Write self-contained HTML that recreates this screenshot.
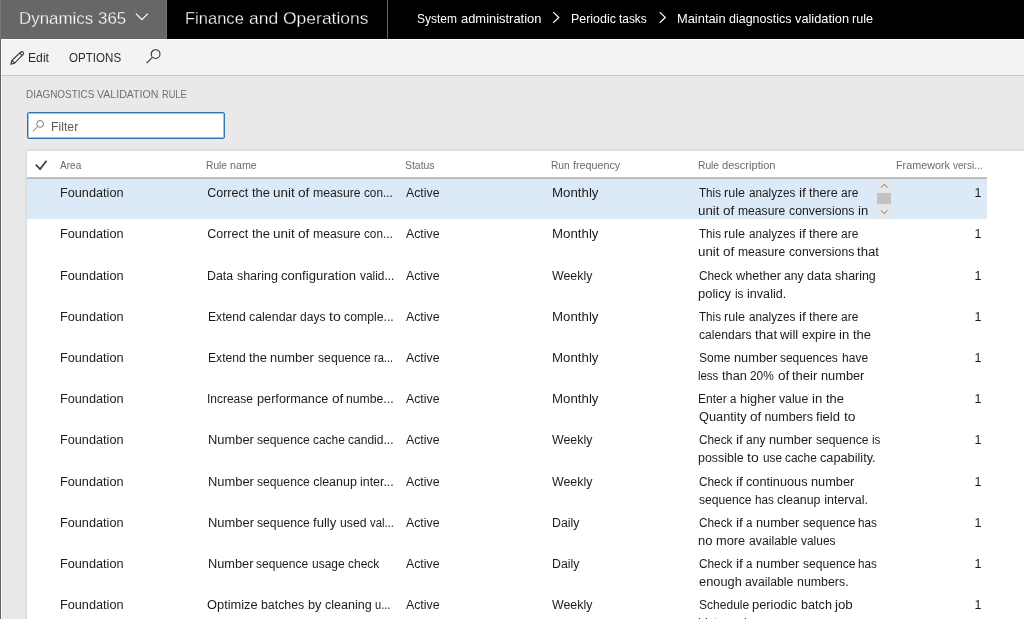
<!DOCTYPE html>
<html><head><meta charset="utf-8">
<title>Maintain diagnostics validation rule</title>
<style>
*{box-sizing:border-box;margin:0;padding:0}
html,body{width:1024px;height:619px;overflow:hidden;background:#e9e9e9;font-family:"Liberation Sans",sans-serif}
.a{position:absolute}
.x{position:absolute;white-space:nowrap;line-height:20px;height:20px}
.x span{position:absolute;top:0;transform-origin:0 0}
svg{position:absolute;overflow:visible}
</style></head><body>
<!-- top bar -->
<div class="a" style="left:0;top:0;width:1024px;height:39px;background:#000"></div>
<div class="a" style="left:0;top:0;width:167px;height:39px;background:#676767;border-right:1px solid #787878"></div>
<div class="a" style="left:387px;top:0;width:1px;height:39px;background:#666"></div>
<svg style="left:0;top:0" width="1024" height="38">
<path d="M135.9 13.7 L141.9 19.7 L147.9 13.7" fill="none" stroke="#fff" stroke-width="1.2"/>
<path d="M553.2 12.1 L558.8 17.45 L553.2 22.8" fill="none" stroke="#fff" stroke-width="1.2"/>
<path d="M659.7 12.1 L665.3 17.45 L659.7 22.8" fill="none" stroke="#fff" stroke-width="1.2"/>
</svg>
<!-- toolbar -->
<div class="a" style="left:0;top:39px;width:1024px;height:37px;background:#f3f3f3;border-bottom:1px solid #c8c8c8;border-top:1px solid #fff"></div>
<svg style="left:10px;top:50px" width="15" height="15" viewBox="0 0 15 15">
<path d="M0.8 14.2 L1.9 10.5 L10.3 2.3 Q12 1.0 13.1 2.2 Q14.2 3.4 13.0 4.7 L4.6 13.2 Z M9.6 3.0 L12.3 5.5 M1.9 10.5 L4.6 13.2" fill="none" stroke="#333" stroke-width="1.05" stroke-linejoin="round"/>
</svg>
<svg style="left:140px;top:45px" width="24" height="22" viewBox="0 0 24 22">
<circle cx="15.6" cy="9.1" r="4.4" fill="none" stroke="#333" stroke-width="1.1"/>
<path d="M12.4 12.4 L6.6 18.1" stroke="#333" stroke-width="1.1" fill="none"/>
</svg>
<!-- left edge -->
<div class="a" style="left:0;top:0;width:1px;height:39px;background:#767676"></div>
<div class="a" style="left:0;top:39px;width:1px;height:580px;background:#666"></div>
<div class="a" style="left:1px;top:39px;width:1px;height:580px;background:rgba(255,255,255,.55)"></div>
<!-- filter -->
<div class="a" style="left:27px;top:112px;width:198px;height:27px;border:1px solid #2e75b6;border-radius:2px;background:#fff;box-shadow:inset 0 0 0 1px rgba(46,117,182,.45)"></div>
<svg style="left:30px;top:118px" width="16" height="16" viewBox="0 0 16 16">
<circle cx="10.1" cy="5.9" r="3.4" fill="none" stroke="#777" stroke-width="1"/>
<path d="M7.6 8.4 L2.9 13.4" stroke="#777" stroke-width="1" fill="none"/>
</svg>
<!-- grid -->
<div class="a" style="left:27px;top:151px;width:1000px;height:480px;background:#fff;box-shadow:0 0 3px rgba(0,0,0,.16)"></div>
<div class="a" style="left:27px;top:177px;width:960px;height:1px;background:#c6c6c6"></div>
<div class="a" style="left:27px;top:178px;width:960px;height:1px;background:#b3b6b9"></div>
<div class="a" style="left:27px;top:179px;width:960px;height:40px;background:#dceaf7"></div>
<svg style="left:33px;top:158px" width="16" height="14" viewBox="0 0 16 14">
<path d="M2.8 6.6 L7.1 11.1 L13.5 2.7" fill="none" stroke="#444" stroke-width="1.8"/>
</svg>
<!-- scrollbar in selected cell -->
<div class="a" style="left:877px;top:179px;width:14px;height:40px;background:#e6e6e6"></div>
<div class="a" style="left:877px;top:193px;width:14px;height:11px;background:#c1c1c1"></div>
<svg style="left:877px;top:179px" width="14" height="40" viewBox="0 0 14 40">
<path d="M3.9 8.6 L7.2 5.3 L10.5 8.6" fill="none" stroke="#666" stroke-width="0.9"/>
<path d="M3.9 31.3 L7.2 34.6 L10.5 31.3" fill="none" stroke="#666" stroke-width="0.9"/>
</svg>
<div id="txt" style="position:absolute;left:0;top:0;width:1024px;height:619px;will-change:transform">
<div class="x" style="left:19.30px;top:9px;font-size:17px;color:#fff;-webkit-text-stroke:.28px #676767"><span style="left:0.00px;transform:scaleX(0.9934)">Dynamics</span> <span style="left:78.92px;transform:scaleX(0.9958)">365</span></div>
<div class="x" style="left:185.45px;top:9px;font-size:17px;color:#fff;-webkit-text-stroke:.28px #000"><span style="left:0.00px;transform:scaleX(0.9726)">Finance</span> <span style="left:63.63px;transform:scaleX(1.0276)">and</span> <span style="left:97.57px;transform:scaleX(1.0287)">Operations</span></div>
<div class="x" style="left:417.45px;top:9px;font-size:13px;color:#fff;"><span style="left:0.00px;transform:scaleX(0.9214)">System</span> <span style="left:43.40px;transform:scaleX(0.9939)">administration</span></div>
<div class="x" style="left:570.81px;top:9px;font-size:13px;color:#fff;"><span style="left:0.00px;transform:scaleX(0.9564)">Periodic</span> <span style="left:48.38px;transform:scaleX(0.9144)">tasks</span></div>
<div class="x" style="left:677.01px;top:9px;font-size:13px;color:#fff;"><span style="left:0.00px;transform:scaleX(0.9895)">Maintain</span> <span style="left:52.06px;transform:scaleX(0.9601)">diagnostics</span> <span style="left:117.95px;transform:scaleX(0.9839)">validation</span> <span style="left:175.44px;transform:scaleX(0.9731)">rule</span></div>
<div class="x" style="left:28.11px;top:48px;font-size:13px;color:#2b2b2b;"><span style="left:0.00px;transform:scaleX(0.9366)">Edit</span></div>
<div class="x" style="left:68.93px;top:48px;font-size:13px;color:#2b2b2b;"><span style="left:0.00px;transform:scaleX(0.8910)">OPTIONS</span></div>
<div class="x" style="left:25.96px;top:84px;font-size:11px;color:#707070;"><span style="left:0.00px;transform:scaleX(0.9004)">DIAGNOSTICS</span> <span style="left:71.22px;transform:scaleX(0.9625)">VALIDATION</span> <span style="left:135.57px;transform:scaleX(0.8385)">RULE</span></div>
<div class="x" style="left:50.65px;top:117px;font-size:12.5px;color:#5a5a5a;"><span style="left:0.00px;transform:scaleX(0.9809)">Filter</span></div>
<div class="x" style="left:59.98px;top:155px;font-size:11px;color:#6a6a6a;"><span style="left:0.00px;transform:scaleX(0.9133)">Area</span></div>
<div class="x" style="left:206.16px;top:155px;font-size:11px;color:#6a6a6a;"><span style="left:0.00px;transform:scaleX(0.9290)">Rule</span> <span style="left:24.00px;transform:scaleX(0.9736)">name</span></div>
<div class="x" style="left:404.54px;top:155px;font-size:11px;color:#6a6a6a;"><span style="left:0.00px;transform:scaleX(0.9487)">Status</span></div>
<div class="x" style="left:551.16px;top:155px;font-size:11px;color:#6a6a6a;"><span style="left:0.00px;transform:scaleX(0.9262)">Run</span> <span style="left:21.65px;transform:scaleX(0.9772)">frequency</span></div>
<div class="x" style="left:698.16px;top:155px;font-size:11px;color:#6a6a6a;"><span style="left:0.00px;transform:scaleX(0.9293)">Rule</span> <span style="left:24.01px;transform:scaleX(1.0056)">description</span></div>
<div class="x" style="left:896.16px;top:155px;font-size:11px;color:#6a6a6a;"><span style="left:0.00px;transform:scaleX(0.9817)">Framework</span> <span style="left:57.03px;transform:scaleX(0.9106)">versi...</span></div>
<div class="x" style="left:60.25px;top:183px;font-size:12.5px;color:#1c1c1c;"><span style="left:0.00px;transform:scaleX(1.0153)">Foundation</span></div>
<div class="x" style="left:207.21px;top:183px;font-size:12.5px;color:#1c1c1c;"><span style="left:0.00px">Correct</span> <span style="left:44.41px;transform:scaleX(1.0425)">the</span> <span style="left:66.00px;transform:scaleX(1.0781)">unit</span> <span style="left:91.21px;transform:scaleX(1.0945)">of</span> <span style="left:106.10px;transform:scaleX(0.9797)">measure</span> <span style="left:157.22px;transform:scaleX(0.9398)">con...</span></div>
<div class="x" style="left:405.88px;top:183px;font-size:12.5px;color:#1c1c1c;"><span style="left:0.00px;transform:scaleX(0.9853)">Active</span></div>
<div class="x" style="left:552.25px;top:183px;font-size:12.5px;color:#1c1c1c;"><span style="left:0.00px;transform:scaleX(1.0619)">Monthly</span></div>
<div class="x" style="left:698.94px;top:183px;font-size:12.5px;color:#1c1c1c;"><span style="left:0.00px;transform:scaleX(0.9312)">This</span> <span style="left:25.42px;transform:scaleX(1.0086)">rule</span> <span style="left:49.87px;transform:scaleX(0.9404)">analyzes</span> <span style="left:99.70px;transform:scaleX(1.1124)">if</span> <span style="left:110.08px;transform:scaleX(1.0103)">there</span> <span style="left:142.30px;transform:scaleX(0.9565)">are</span></div>
<div class="x" style="left:698.45px;top:201px;font-size:12.5px;color:#1c1c1c;"><span style="left:0.00px;transform:scaleX(1.0674)">unit</span> <span style="left:24.95px;transform:scaleX(1.0836)">of</span> <span style="left:39.69px;transform:scaleX(0.9700)">measure</span> <span style="left:90.31px;transform:scaleX(0.9807)">conversions</span> <span style="left:159.16px;transform:scaleX(1.0432)">in</span></div>
<div class="x" style="left:974.50px;top:183px;font-size:12.5px;color:#1c1c1c">1</div>
<div class="x" style="left:60.25px;top:224px;font-size:12.5px;color:#1c1c1c;"><span style="left:0.00px;transform:scaleX(1.0153)">Foundation</span></div>
<div class="x" style="left:207.21px;top:224px;font-size:12.5px;color:#1c1c1c;"><span style="left:0.00px">Correct</span> <span style="left:44.41px;transform:scaleX(1.0425)">the</span> <span style="left:66.00px;transform:scaleX(1.0781)">unit</span> <span style="left:91.21px;transform:scaleX(1.0945)">of</span> <span style="left:106.10px;transform:scaleX(0.9797)">measure</span> <span style="left:157.22px;transform:scaleX(0.9398)">con...</span></div>
<div class="x" style="left:405.88px;top:224px;font-size:12.5px;color:#1c1c1c;"><span style="left:0.00px;transform:scaleX(0.9853)">Active</span></div>
<div class="x" style="left:552.25px;top:224px;font-size:12.5px;color:#1c1c1c;"><span style="left:0.00px;transform:scaleX(1.0619)">Monthly</span></div>
<div class="x" style="left:698.94px;top:224px;font-size:12.5px;color:#1c1c1c;"><span style="left:0.00px;transform:scaleX(0.9312)">This</span> <span style="left:25.42px;transform:scaleX(1.0086)">rule</span> <span style="left:49.87px;transform:scaleX(0.9404)">analyzes</span> <span style="left:99.70px;transform:scaleX(1.1124)">if</span> <span style="left:110.08px;transform:scaleX(1.0103)">there</span> <span style="left:142.30px;transform:scaleX(0.9565)">are</span></div>
<div class="x" style="left:698.45px;top:242px;font-size:12.5px;color:#1c1c1c;"><span style="left:0.00px;transform:scaleX(1.0660)">unit</span> <span style="left:24.92px;transform:scaleX(1.0822)">of</span> <span style="left:39.64px;transform:scaleX(0.9687)">measure</span> <span style="left:90.19px;transform:scaleX(0.9794)">conversions</span> <span style="left:158.95px;transform:scaleX(1.0546)">that</span></div>
<div class="x" style="left:974.50px;top:224px;font-size:12.5px;color:#1c1c1c">1</div>
<div class="x" style="left:60.25px;top:266px;font-size:12.5px;color:#1c1c1c;"><span style="left:0.00px;transform:scaleX(1.0153)">Foundation</span></div>
<div class="x" style="left:207.35px;top:266px;font-size:12.5px;color:#1c1c1c;"><span style="left:0.00px;transform:scaleX(0.9880)">Data</span> <span style="left:29.56px">sharing</span> <span style="left:74.14px;transform:scaleX(1.0471)">configuration</span> <span style="left:152.56px;transform:scaleX(0.9510)">valid...</span></div>
<div class="x" style="left:405.88px;top:266px;font-size:12.5px;color:#1c1c1c;"><span style="left:0.00px;transform:scaleX(0.9853)">Active</span></div>
<div class="x" style="left:552.45px;top:266px;font-size:12.5px;color:#1c1c1c;"><span style="left:0.00px;transform:scaleX(0.9895)">Weekly</span></div>
<div class="x" style="left:698.61px;top:266px;font-size:12.5px;color:#1c1c1c;"><span style="left:0.00px;transform:scaleX(0.9463)">Check</span> <span style="left:36.97px;transform:scaleX(1.0137)">whether</span> <span style="left:85.50px;transform:scaleX(0.9694)">any</span> <span style="left:108.48px;transform:scaleX(1.0049)">data</span> <span style="left:136.37px;transform:scaleX(0.9944)">sharing</span></div>
<div class="x" style="left:698.45px;top:284px;font-size:12.5px;color:#1c1c1c;"><span style="left:0.00px;transform:scaleX(1.0355)">policy</span> <span style="left:36.58px;transform:scaleX(0.9399)">is</span> <span style="left:48.55px;transform:scaleX(1.0090)">invalid.</span></div>
<div class="x" style="left:974.50px;top:266px;font-size:12.5px;color:#1c1c1c">1</div>
<div class="x" style="left:60.25px;top:307px;font-size:12.5px;color:#1c1c1c;"><span style="left:0.00px;transform:scaleX(1.0153)">Foundation</span></div>
<div class="x" style="left:207.55px;top:307px;font-size:12.5px;color:#1c1c1c;"><span style="left:0.00px;transform:scaleX(0.9727)">Extend</span> <span style="left:41.33px;transform:scaleX(0.9924)">calendar</span> <span style="left:92.40px;transform:scaleX(0.9624)">days</span> <span style="left:121.29px;transform:scaleX(1.1269)">to</span> <span style="left:136.52px;transform:scaleX(0.9800)">comple...</span></div>
<div class="x" style="left:405.88px;top:307px;font-size:12.5px;color:#1c1c1c;"><span style="left:0.00px;transform:scaleX(0.9853)">Active</span></div>
<div class="x" style="left:552.25px;top:307px;font-size:12.5px;color:#1c1c1c;"><span style="left:0.00px;transform:scaleX(1.0619)">Monthly</span></div>
<div class="x" style="left:698.94px;top:307px;font-size:12.5px;color:#1c1c1c;"><span style="left:0.00px;transform:scaleX(0.9312)">This</span> <span style="left:25.42px;transform:scaleX(1.0086)">rule</span> <span style="left:49.87px;transform:scaleX(0.9404)">analyzes</span> <span style="left:99.70px;transform:scaleX(1.1124)">if</span> <span style="left:110.08px;transform:scaleX(1.0103)">there</span> <span style="left:142.30px;transform:scaleX(0.9565)">are</span></div>
<div class="x" style="left:698.71px;top:325px;font-size:12.5px;color:#1c1c1c;"><span style="left:0.00px;transform:scaleX(0.9685)">calendars</span> <span style="left:55.94px;transform:scaleX(1.0577)">that</span> <span style="left:81.44px;transform:scaleX(1.0498)">will</span> <span style="left:103.11px;transform:scaleX(0.9920)">expire</span> <span style="left:140.33px;transform:scaleX(1.0449)">in</span> <span style="left:153.95px;transform:scaleX(1.0338)">the</span></div>
<div class="x" style="left:974.50px;top:307px;font-size:12.5px;color:#1c1c1c">1</div>
<div class="x" style="left:60.25px;top:348px;font-size:12.5px;color:#1c1c1c;"><span style="left:0.00px;transform:scaleX(1.0153)">Foundation</span></div>
<div class="x" style="left:207.55px;top:348px;font-size:12.5px;color:#1c1c1c;"><span style="left:0.00px;transform:scaleX(0.9701)">Extend</span> <span style="left:41.22px;transform:scaleX(1.0406)">the</span> <span style="left:62.78px;transform:scaleX(1.0316)">number</span> <span style="left:109.97px;transform:scaleX(0.9754)">sequence</span> <span style="left:166.32px;transform:scaleX(0.8868)">ra...</span></div>
<div class="x" style="left:405.88px;top:348px;font-size:12.5px;color:#1c1c1c;"><span style="left:0.00px;transform:scaleX(0.9853)">Active</span></div>
<div class="x" style="left:552.25px;top:348px;font-size:12.5px;color:#1c1c1c;"><span style="left:0.00px;transform:scaleX(1.0619)">Monthly</span></div>
<div class="x" style="left:698.67px;top:348px;font-size:12.5px;color:#1c1c1c;"><span style="left:0.00px;transform:scaleX(0.9622)">Some</span> <span style="left:34.86px;transform:scaleX(1.0230)">number</span> <span style="left:81.66px;transform:scaleX(0.9554)">sequences</span> <span style="left:142.87px;transform:scaleX(0.9620)">have</span></div>
<div class="x" style="left:698.42px;top:366px;font-size:12.5px;color:#1c1c1c;"><span style="left:0.00px;transform:scaleX(0.9122)">less</span> <span style="left:23.72px;transform:scaleX(1.0218)">than</span> <span style="left:52.02px;transform:scaleX(0.9522)">20%</span> <span style="left:79.28px;transform:scaleX(1.0835)">of</span> <span style="left:94.02px;transform:scaleX(1.0425)">their</span> <span style="left:122.81px;transform:scaleX(1.0231)">number</span></div>
<div class="x" style="left:974.50px;top:348px;font-size:12.5px;color:#1c1c1c">1</div>
<div class="x" style="left:60.25px;top:389px;font-size:12.5px;color:#1c1c1c;"><span style="left:0.00px;transform:scaleX(1.0153)">Foundation</span></div>
<div class="x" style="left:207.43px;top:389px;font-size:12.5px;color:#1c1c1c;"><span style="left:0.00px;transform:scaleX(0.9569)">Increase</span> <span style="left:49.35px;transform:scaleX(1.0160)">performance</span> <span style="left:124.11px;transform:scaleX(1.0926)">of</span> <span style="left:138.97px;transform:scaleX(0.9778)">numbe...</span></div>
<div class="x" style="left:405.88px;top:389px;font-size:12.5px;color:#1c1c1c;"><span style="left:0.00px;transform:scaleX(0.9853)">Active</span></div>
<div class="x" style="left:552.25px;top:389px;font-size:12.5px;color:#1c1c1c;"><span style="left:0.00px;transform:scaleX(1.0619)">Monthly</span></div>
<div class="x" style="left:698.25px;top:389px;font-size:12.5px;color:#1c1c1c;"><span style="left:0.00px;transform:scaleX(0.9621)">Enter</span> <span style="left:32.20px;transform:scaleX(0.9222)">a</span> <span style="left:42.06px;transform:scaleX(1.0270)">higher</span> <span style="left:81.20px;transform:scaleX(0.9774)">value</span> <span style="left:113.86px;transform:scaleX(1.0460)">in</span> <span style="left:127.49px;transform:scaleX(1.0350)">the</span></div>
<div class="x" style="left:698.65px;top:407px;font-size:12.5px;color:#1c1c1c;"><span style="left:0.00px;transform:scaleX(1.0226)">Quantity</span> <span style="left:51.04px;transform:scaleX(1.0823)">of</span> <span style="left:65.76px">numbers</span> <span style="left:117.84px;transform:scaleX(1.0444)">field</span> <span style="left:145.23px;transform:scaleX(1.1134)">to</span></div>
<div class="x" style="left:974.50px;top:389px;font-size:12.5px;color:#1c1c1c">1</div>
<div class="x" style="left:60.25px;top:430px;font-size:12.5px;color:#1c1c1c;"><span style="left:0.00px;transform:scaleX(1.0153)">Foundation</span></div>
<div class="x" style="left:207.55px;top:430px;font-size:12.5px;color:#1c1c1c;"><span style="left:0.00px;transform:scaleX(1.0327)">Number</span> <span style="left:49.37px;transform:scaleX(0.9727)">sequence</span> <span style="left:105.56px;transform:scaleX(0.9549)">cache</span> <span style="left:140.88px;transform:scaleX(0.9637)">candid...</span></div>
<div class="x" style="left:405.88px;top:430px;font-size:12.5px;color:#1c1c1c;"><span style="left:0.00px;transform:scaleX(0.9853)">Active</span></div>
<div class="x" style="left:552.45px;top:430px;font-size:12.5px;color:#1c1c1c;"><span style="left:0.00px;transform:scaleX(0.9895)">Weekly</span></div>
<div class="x" style="left:698.61px;top:430px;font-size:12.5px;color:#1c1c1c;"><span style="left:0.00px;transform:scaleX(0.9452)">Check</span> <span style="left:36.93px;transform:scaleX(1.1156)">if</span> <span style="left:47.34px;transform:scaleX(0.9682)">any</span> <span style="left:70.30px;transform:scaleX(1.0227)">number</span> <span style="left:117.08px;transform:scaleX(0.9669)">sequence</span> <span style="left:172.94px;transform:scaleX(0.9273)">is</span></div>
<div class="x" style="left:698.45px;top:448px;font-size:12.5px;color:#1c1c1c;"><span style="left:0.00px;transform:scaleX(0.9933)">possible</span> <span style="left:49.00px;transform:scaleX(1.1171)">to</span> <span style="left:64.10px;transform:scaleX(0.9451)">use</span> <span style="left:86.60px;transform:scaleX(0.9517)">cache</span> <span style="left:121.79px;transform:scaleX(1.0176)">capability.</span></div>
<div class="x" style="left:974.50px;top:430px;font-size:12.5px;color:#1c1c1c">1</div>
<div class="x" style="left:60.25px;top:472px;font-size:12.5px;color:#1c1c1c;"><span style="left:0.00px;transform:scaleX(1.0153)">Foundation</span></div>
<div class="x" style="left:207.55px;top:472px;font-size:12.5px;color:#1c1c1c;"><span style="left:0.00px;transform:scaleX(1.0329)">Number</span> <span style="left:49.38px;transform:scaleX(0.9729)">sequence</span> <span style="left:105.59px">cleanup</span> <span style="left:152.70px;transform:scaleX(0.9903)">inter...</span></div>
<div class="x" style="left:405.88px;top:472px;font-size:12.5px;color:#1c1c1c;"><span style="left:0.00px;transform:scaleX(0.9853)">Active</span></div>
<div class="x" style="left:552.45px;top:472px;font-size:12.5px;color:#1c1c1c;"><span style="left:0.00px;transform:scaleX(0.9895)">Weekly</span></div>
<div class="x" style="left:698.61px;top:472px;font-size:12.5px;color:#1c1c1c;"><span style="left:0.00px;transform:scaleX(0.9446)">Check</span> <span style="left:36.91px;transform:scaleX(1.1149)">if</span> <span style="left:47.31px;transform:scaleX(1.0174)">continuous</span> <span style="left:112.27px;transform:scaleX(1.0221)">number</span></div>
<div class="x" style="left:698.88px;top:490px;font-size:12.5px;color:#1c1c1c;"><span style="left:0.00px;transform:scaleX(0.9700)">sequence</span> <span style="left:56.04px;transform:scaleX(0.9368)">has</span> <span style="left:78.37px;transform:scaleX(0.9940)">cleanup</span> <span style="left:125.34px">interval.</span></div>
<div class="x" style="left:974.50px;top:472px;font-size:12.5px;color:#1c1c1c">1</div>
<div class="x" style="left:60.25px;top:513px;font-size:12.5px;color:#1c1c1c;"><span style="left:0.00px;transform:scaleX(1.0153)">Foundation</span></div>
<div class="x" style="left:207.55px;top:513px;font-size:12.5px;color:#1c1c1c;"><span style="left:0.00px;transform:scaleX(1.0347)">Number</span> <span style="left:49.47px;transform:scaleX(0.9746)">sequence</span> <span style="left:105.77px;transform:scaleX(1.0491)">fully</span> <span style="left:132.56px;transform:scaleX(0.9810)">used</span> <span style="left:162.62px;transform:scaleX(0.9015)">val...</span></div>
<div class="x" style="left:405.88px;top:513px;font-size:12.5px;color:#1c1c1c;"><span style="left:0.00px;transform:scaleX(0.9853)">Active</span></div>
<div class="x" style="left:552.35px;top:513px;font-size:12.5px;color:#1c1c1c;"><span style="left:0.00px;transform:scaleX(0.9854)">Daily</span></div>
<div class="x" style="left:698.61px;top:513px;font-size:12.5px;color:#1c1c1c;"><span style="left:0.00px;transform:scaleX(0.9451)">Check</span> <span style="left:36.92px;transform:scaleX(1.1154)">if</span> <span style="left:47.34px;transform:scaleX(0.9190)">a</span> <span style="left:57.16px;transform:scaleX(1.0225)">number</span> <span style="left:103.94px;transform:scaleX(0.9668)">sequence</span> <span style="left:159.79px;transform:scaleX(0.9337)">has</span></div>
<div class="x" style="left:698.43px;top:531px;font-size:12.5px;color:#1c1c1c;"><span style="left:0.00px;transform:scaleX(1.0423)">no</span> <span style="left:17.94px;transform:scaleX(1.0246)">more</span> <span style="left:50.57px;transform:scaleX(0.9802)">available</span> <span style="left:102.38px;transform:scaleX(0.9552)">values</span></div>
<div class="x" style="left:974.50px;top:513px;font-size:12.5px;color:#1c1c1c">1</div>
<div class="x" style="left:60.25px;top:554px;font-size:12.5px;color:#1c1c1c;"><span style="left:0.00px;transform:scaleX(1.0153)">Foundation</span></div>
<div class="x" style="left:207.55px;top:554px;font-size:12.5px;color:#1c1c1c;"><span style="left:0.00px;transform:scaleX(1.0222)">Number</span> <span style="left:48.87px;transform:scaleX(0.9629)">sequence</span> <span style="left:104.50px;transform:scaleX(0.9582)">usage</span> <span style="left:140.55px;transform:scaleX(0.9610)">check</span></div>
<div class="x" style="left:405.88px;top:554px;font-size:12.5px;color:#1c1c1c;"><span style="left:0.00px;transform:scaleX(0.9853)">Active</span></div>
<div class="x" style="left:552.35px;top:554px;font-size:12.5px;color:#1c1c1c;"><span style="left:0.00px;transform:scaleX(0.9854)">Daily</span></div>
<div class="x" style="left:698.61px;top:554px;font-size:12.5px;color:#1c1c1c;"><span style="left:0.00px;transform:scaleX(0.9451)">Check</span> <span style="left:36.92px;transform:scaleX(1.1154)">if</span> <span style="left:47.34px;transform:scaleX(0.9190)">a</span> <span style="left:57.16px;transform:scaleX(1.0225)">number</span> <span style="left:103.94px;transform:scaleX(0.9668)">sequence</span> <span style="left:159.79px;transform:scaleX(0.9337)">has</span></div>
<div class="x" style="left:698.71px;top:572px;font-size:12.5px;color:#1c1c1c;"><span style="left:0.00px;transform:scaleX(1.0251)">enough</span> <span style="left:46.21px;transform:scaleX(0.9813)">available</span> <span style="left:98.08px;transform:scaleX(0.9897)">numbers.</span></div>
<div class="x" style="left:974.50px;top:554px;font-size:12.5px;color:#1c1c1c">1</div>
<div class="x" style="left:60.25px;top:595px;font-size:12.5px;color:#1c1c1c;"><span style="left:0.00px;transform:scaleX(1.0153)">Foundation</span></div>
<div class="x" style="left:207.20px;top:595px;font-size:12.5px;color:#1c1c1c;"><span style="left:0.00px;transform:scaleX(1.0270)">Optimize</span> <span style="left:54.12px;transform:scaleX(0.9858)">batches</span> <span style="left:100.74px;transform:scaleX(1.0233)">by</span> <span style="left:117.72px;transform:scaleX(1.0048)">cleaning</span> <span style="left:167.97px;transform:scaleX(0.8859)">u...</span></div>
<div class="x" style="left:405.88px;top:595px;font-size:12.5px;color:#1c1c1c;"><span style="left:0.00px;transform:scaleX(0.9853)">Active</span></div>
<div class="x" style="left:552.45px;top:595px;font-size:12.5px;color:#1c1c1c;"><span style="left:0.00px;transform:scaleX(0.9895)">Weekly</span></div>
<div class="x" style="left:698.67px;top:595px;font-size:12.5px;color:#1c1c1c;"><span style="left:0.00px;transform:scaleX(0.9630)">Schedule</span> <span style="left:53.64px;transform:scaleX(1.0262)">periodic</span> <span style="left:101.99px;transform:scaleX(1.0109)">batch</span> <span style="left:136.34px;transform:scaleX(1.0654)">job</span></div>
<div class="x" style="left:698.39px;top:613px;font-size:12.5px;color:#1c1c1c;"><span style="left:0.00px;transform:scaleX(0.9913)">history</span> <span style="left:39.85px;transform:scaleX(0.9648)">cleanup</span></div>
<div class="x" style="left:974.50px;top:595px;font-size:12.5px;color:#1c1c1c">1</div>
</div>
</body></html>
